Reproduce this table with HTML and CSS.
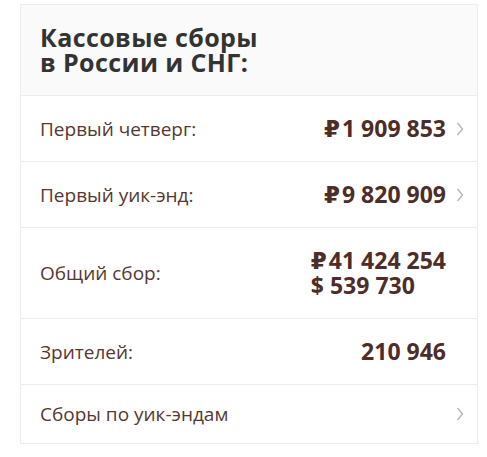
FILE: index.html
```html
<!DOCTYPE html>
<html lang="ru">
<head>
<meta charset="utf-8">
<link rel="stylesheet" href="styles.css">
</head>
<body>
<div class="card">
  <div class="card-head">
    <h2 class="title">Кассовые сборы<br>в России и СНГ:</h2>
  </div>
  <div class="row">
    <span class="label">Первый четверг:</span>
    <span class="value"><span class="rub">₽</span>1 909 853</span>
    <span class="chev"><svg width="8" height="14" viewBox="0 0 8 14"><polyline points="1.5,1 6.5,7 1.5,13" fill="none" stroke="#b3b3b3" stroke-width="1.3"/></svg></span>
  </div>
  <div class="row">
    <span class="label">Первый уик-энд:</span>
    <span class="value"><span class="rub">₽</span>9 820 909</span>
    <span class="chev"><svg width="8" height="14" viewBox="0 0 8 14"><polyline points="1.5,1 6.5,7 1.5,13" fill="none" stroke="#b3b3b3" stroke-width="1.3"/></svg></span>
  </div>
  <div class="row">
    <span class="label">Общий сбор:</span>
    <span class="value"><span class="rub">₽</span>41 424 254<br>$ 539 730</span>
    <span class="chev"></span>
  </div>
  <div class="row">
    <span class="label">Зрителей:</span>
    <span class="value">210 946</span>
    <span class="chev"></span>
  </div>
  <div class="row row-link">
    <span class="label">Сборы по уик-эндам</span>
    <span class="chev"><svg width="8" height="14" viewBox="0 0 8 14"><polyline points="1.5,1 6.5,7 1.5,13" fill="none" stroke="#b3b3b3" stroke-width="1.3"/></svg></span>
  </div>
</div>
</body>
</html>
```
FILE: styles.css
```css
html, body {
  margin: 0;
  padding: 0;
  background: #fff;
}
body {
  font-family: "Open Sans", "DejaVu Sans", sans-serif;
  padding: 4px 0 0 20px;
}
.card {
  width: 458px;
  box-sizing: border-box;
  border: 1px solid #ececec;
}
.card-head {
  background: #fafafa;
  border-bottom: 1px solid #ececec;
  padding: 20px 19px;
}
.title {
  margin: 0;
  font-size: 25px;
  line-height: 25px;
  font-weight: 700;
  letter-spacing: 0.4px;
  color: #333;
}
.row {
  display: flex;
  align-items: center;
  padding: 20px 13px 20px 19px;
  border-bottom: 1px solid #ececec;
}
.row:last-child {
  border-bottom: none;
}
.label {
  flex: 1;
  font-size: 19px;
  line-height: 18px;
  color: #55382f;
}
.value {
  font-size: 23px;
  line-height: 25px;
  font-weight: 700;
  color: #4d2d27;
}
.rub {
  margin-right: 2px;
}
.chev {
  width: 8px;
  margin-left: 10px;
  display: flex;
  align-items: center;
}
```
